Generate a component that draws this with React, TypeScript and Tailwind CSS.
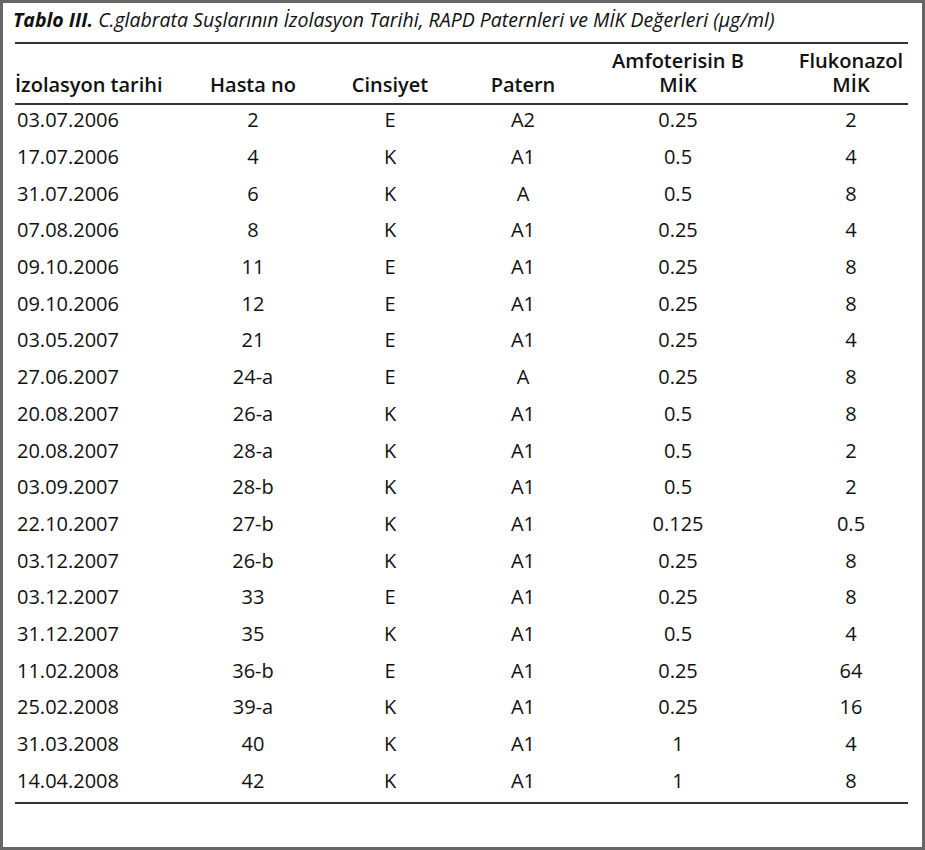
const rows: string[][] = [
  ["03.07.2006", "2", "E", "A2", "0.25", "2"],
  ["17.07.2006", "4", "K", "A1", "0.5", "4"],
  ["31.07.2006", "6", "K", "A", "0.5", "8"],
  ["07.08.2006", "8", "K", "A1", "0.25", "4"],
  ["09.10.2006", "11", "E", "A1", "0.25", "8"],
  ["09.10.2006", "12", "E", "A1", "0.25", "8"],
  ["03.05.2007", "21", "E", "A1", "0.25", "4"],
  ["27.06.2007", "24-a", "E", "A", "0.25", "8"],
  ["20.08.2007", "26-a", "K", "A1", "0.5", "8"],
  ["20.08.2007", "28-a", "K", "A1", "0.5", "2"],
  ["03.09.2007", "28-b", "K", "A1", "0.5", "2"],
  ["22.10.2007", "27-b", "K", "A1", "0.125", "0.5"],
  ["03.12.2007", "26-b", "K", "A1", "0.25", "8"],
  ["03.12.2007", "33", "E", "A1", "0.25", "8"],
  ["31.12.2007", "35", "K", "A1", "0.5", "4"],
  ["11.02.2008", "36-b", "E", "A1", "0.25", "64"],
  ["25.02.2008", "39-a", "K", "A1", "0.25", "16"],
  ["31.03.2008", "40", "K", "A1", "1", "4"],
  ["14.04.2008", "42", "K", "A1", "1", "8"],
];

const grid = "grid grid-cols-[195px_86px_188px_78px_232px_114px]";

export default function App() {
  return (
    <div className="w-[925px] h-[850px] bg-white border-[3px] border-[#666] text-[#111] font-['Open_Sans',sans-serif]">
      <div className="ml-[12px] w-[893px]">
        {/* Caption */}
        <p className="h-[39px] pt-[4px] text-[19.5px] leading-[26px] italic whitespace-nowrap -ml-[2px]">
          <span className="font-bold">Tablo III.</span> C.glabrata Suşlarının İzolasyon Tarihi, RAPD Paternleri ve MİK Değerleri (µg/ml)
        </p>
        <div className="h-[2px] bg-[#333]" />

        {/* Header */}
        <div className={`${grid} h-[59px] items-end pb-[6px] text-[20px] leading-[24px] font-semibold`}>
          <div className="whitespace-nowrap">İzolasyon tarihi</div>
          <div className="flex justify-center whitespace-nowrap">Hasta no</div>
          <div className="flex justify-center whitespace-nowrap">Cinsiyet</div>
          <div className="flex justify-center whitespace-nowrap">Patern</div>
          <div className="flex flex-col items-center gap-[1px] whitespace-nowrap">
            <span className="leading-[23px]">Amfoterisin B</span>
            <span>MİK</span>
          </div>
          <div className="flex flex-col items-center gap-[1px] whitespace-nowrap">
            <span className="leading-[23px]">Flukonazol</span>
            <span>MİK</span>
          </div>
        </div>
        <div className="h-[2px] bg-[#333]" />

        {/* Body */}
        <div>
          {rows.map((r, i) => (
            <div key={i} className={`${grid} h-[36.7px] items-center pb-[6px] text-[20px] leading-[24px]`}>
              {r.map((c, j) => (
                <div key={j} className={j === 0 ? "pl-[2px] whitespace-nowrap" : "flex justify-center whitespace-nowrap"}>
                  {c}
                </div>
              ))}
            </div>
          ))}
        </div>
        <div className="h-[2px] bg-[#333]" />
      </div>
    </div>
  );
}
